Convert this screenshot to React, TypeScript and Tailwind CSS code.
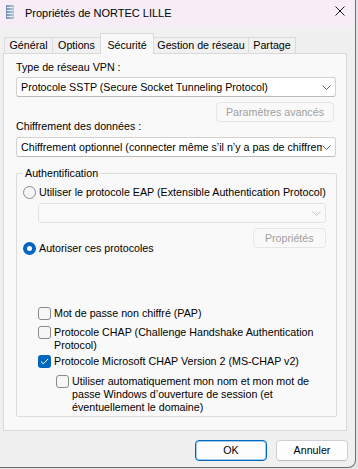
import React from 'react';

const font = "font-['Liberation_Sans',Arial,sans-serif]";

function Chevron({ disabled }: { disabled?: boolean }) {
  return (
    <svg width="9" height="5" viewBox="0 0 9 5" className="shrink-0">
      <path d="M0.5 0.5 L4.5 4.5 L8.5 0.5" fill="none" stroke={disabled ? '#c4c4c4' : '#6a6a6a'} strokeWidth="1" />
    </svg>
  );
}

function Select({ value, disabled, className = '' }: { value?: string; disabled?: boolean; className?: string }) {
  return (
    <div
      className={`h-[20px] flex items-center rounded-[3px] border pl-[4px] pr-[4px] ${
        disabled ? 'bg-[#fafafa] border-[#e3e3e3]' : 'bg-white border-[#d2d2d2] border-b-[#b9b9b9]'
      } ${className}`}
    >
      <span className="flex-1 overflow-hidden whitespace-nowrap leading-[13px] pr-[8px]">{value}</span>
      <Chevron disabled={disabled} />
    </div>
  );
}

function Button({ label, disabled, primary, className = '' }: { label: string; disabled?: boolean; primary?: boolean; className?: string }) {
  return (
    <button
      className={`h-[20px] rounded-[4px] border leading-[13px] ${
        disabled
          ? 'bg-[#f9f9f9] border-[#e6e6e6] text-[#a0a0a0]'
          : primary
          ? 'bg-[#fdfdfd] border-[#0067c0] shadow-[inset_0_0_0_1px_rgba(0,103,192,0.35)] text-black'
          : 'bg-[#fdfdfd] border-[#d0d0d0] border-b-[#bdbdbd] text-black'
      } ${className}`}
    >
      {label}
    </button>
  );
}

function Radio({ checked }: { checked?: boolean }) {
  if (checked) {
    return (
      <span className="w-[13px] h-[13px] rounded-full bg-[#0067c0] flex items-center justify-center shrink-0">
        <span className="w-[5px] h-[5px] rounded-full bg-white" />
      </span>
    );
  }
  return <span className="w-[13px] h-[13px] rounded-full border border-[#8a8a8a] bg-[#f5f5f5] shrink-0" />;
}

function Checkbox({ checked }: { checked?: boolean }) {
  if (checked) {
    return (
      <span className="w-[13px] h-[13px] rounded-[3px] bg-[#0067c0] flex items-center justify-center shrink-0">
        <svg width="9" height="7" viewBox="0 0 9 7">
          <path d="M1 3.6 L3.3 5.8 L8 1" fill="none" stroke="white" strokeWidth="1" />
        </svg>
      </span>
    );
  }
  return <span className="w-[13px] h-[13px] rounded-[3px] border border-[#8a8a8a] bg-[#f7f7f7] shrink-0" />;
}

const tabs = [
  { label: 'Général', w: 'w-[49px]' },
  { label: 'Options', w: 'w-[49px]' },
  { label: 'Sécurité', w: 'w-[54px]' },
  { label: 'Gestion de réseau', w: 'w-[96px]' },
  { label: 'Partage', w: 'w-[48px]' },
];

export default function App() {
  return (
    <div className={`w-[358px] h-[469px] bg-[#e4e4e4] overflow-hidden text-[10.7px] text-black ${font}`}>
      <div className="w-[356px] h-[468px] bg-[#f0f0f0] border-r border-b border-[#6e6e6e] rounded-br-[8px] flex flex-col overflow-hidden">
        {/* title bar */}
        <div className="h-[26px] bg-[#f6edf6] flex items-center shrink-0">
          <svg width="8" height="14" viewBox="0 0 8 14" className="ml-[6px] mb-[2px]">
            <defs>
              <linearGradient id="ic" x1="0" x2="1" y1="0" y2="0">
                <stop offset="0" stopColor="#6f8fb3" />
                <stop offset="1" stopColor="#b8c9dc" />
              </linearGradient>
            </defs>
            <rect x="0" y="0" width="8" height="14" fill="url(#ic)" />
            <rect x="1" y="2" width="6" height="1" fill="#e9eff6" />
            <rect x="1" y="5" width="6" height="1" fill="#e9eff6" />
            <rect x="1" y="8" width="6" height="1" fill="#e9eff6" />
            <rect x="1" y="11" width="6" height="1" fill="#e9eff6" />
          </svg>
          <span className="ml-[11px] text-[11px] leading-[13px]">Propriétés de NORTEC LILLE</span>
          <svg width="10" height="10" viewBox="0 0 10 10" className="ml-auto mr-[10px] mb-[5px]">
            <path d="M0.5 0.5 L9.5 9.5 M9.5 0.5 L0.5 9.5" stroke="#1a1a1a" strokeWidth="1" />
          </svg>
        </div>

        {/* tabs + panel */}
        <div className="pl-[3px] pr-[8px] pt-[7px]">
          <div className="flex items-end pl-[1px] h-[20px] relative z-10">
            {tabs.map(t =>
              t.label === 'Sécurité' ? (
                <div
                  key={t.label}
                  className={`${t.w} h-[21px] -ml-px bg-[#f9f9f9] border border-b-0 border-[#d9d9d9] flex justify-center pt-[3px] -mb-px whitespace-nowrap`}
                >
                  {t.label}
                </div>
              ) : (
                <div
                  key={t.label}
                  className={`${t.w} h-[16px] bg-[#f0f0f0] border border-b-0 border-[#dcdcdc] -ml-px first:ml-0 flex items-center justify-center whitespace-nowrap`}
                >
                  {t.label}
                </div>
              )
            )}
          </div>
          <div className="h-[378px] bg-[#f9f9f9] border border-[#d9d9d9] pl-[12px] pr-[10px] flex flex-col">
            <div className="mt-[7px] leading-[13px]">Type de réseau VPN :</div>
            <Select className="mt-[3px]" value="Protocole SSTP (Secure Socket Tunneling Protocol)" />
            <Button className="mt-[5px] self-end mr-[2px] w-[118px]" label="Paramètres avancés" disabled />
            <div className="-mt-[2px] leading-[13px]">Chiffrement des données :</div>
            <Select className="mt-[4px]" value="Chiffrement optionnel (connecter même s’il n’y a pas de chiffrement)" />

            <fieldset className="mt-[10px] border border-[#dcdcdc] rounded-[2px] pl-[6px] pr-[10px] pb-[2px] flex flex-col">
              <legend className="px-[2px] leading-[13px]">Authentification</legend>
              <label className="mt-[6px] flex items-center gap-[3px] leading-[13px] whitespace-nowrap">
                <Radio />
                Utiliser le protocole EAP (Extensible Authentication Protocol)
              </label>
              <Select className="mt-[4px] ml-[15px]" disabled />
              <div className="flex justify-between items-start mt-[5px]">
                <label className="mt-[14px] flex items-center gap-[3px] leading-[13px] whitespace-nowrap">
                  <Radio checked />
                  Autoriser ces protocoles
                </label>
                <Button className="w-[73px]" label="Propriétés" disabled />
              </div>

              <div className="ml-[15px] flex flex-col whitespace-nowrap">
                <label className="mt-[52px] flex items-center gap-[3px] leading-[13px]">
                  <Checkbox />
                  Mot de passe non chiffré (PAP)
                </label>
                <label className="mt-[6px] flex items-start gap-[3px] leading-[13px]">
                  <Checkbox />
                  <span>
                    Protocole CHAP (Challenge Handshake Authentication
                    <br />
                    Protocol)
                  </span>
                </label>
                <label className="mt-[3px] flex items-center gap-[3px] leading-[13px]">
                  <Checkbox checked />
                  Protocole Microsoft CHAP Version 2 (MS-CHAP v2)
                </label>
                <label className="mt-[7px] ml-[18px] flex items-start gap-[3px] leading-[13px]">
                  <Checkbox />
                  <span>
                    Utiliser automatiquement mon nom et mon mot de
                    <br />
                    passe Windows d’ouverture de session (et
                    <br />
                    éventuellement le domaine)
                  </span>
                </label>
              </div>
            </fieldset>
          </div>
        </div>

        {/* dialog buttons */}
        <div className="flex justify-end gap-[9px] pr-[7px] mt-[9px]">
          <Button className="w-[72px] h-[21px]" label="OK" primary />
          <Button className="w-[72px] h-[21px]" label="Annuler" />
        </div>
      </div>
    </div>
  );
}
